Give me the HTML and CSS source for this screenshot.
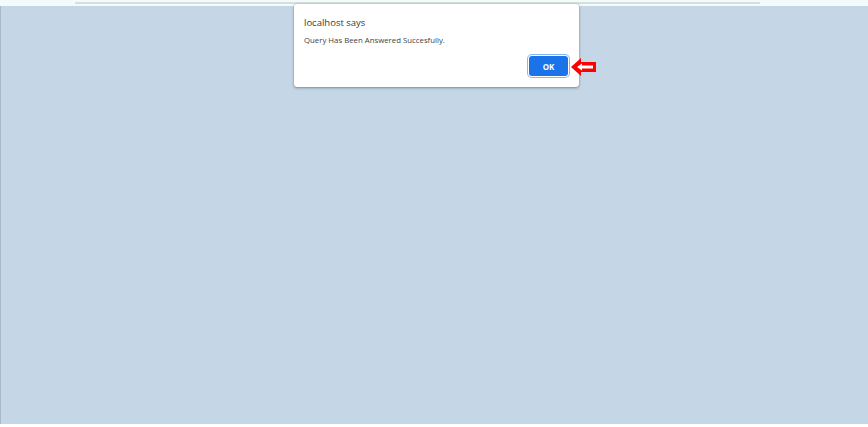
FILE: index.html
```html
<!DOCTYPE html>
<html>
<head>
<meta charset="utf-8">
<link rel="stylesheet" href="styles.css">
</head>
<body>
<div class="screen">
  <div class="topbar"><div class="topline"></div></div>
  <div class="page"></div>
  <div class="bottombar"></div>
</div>
<div class="dialog">
  <div class="title">localhost says</div>
  <div class="message">Query Has Been Answered Succesfully.</div>
  <div class="actions">
    <button class="ok">OK</button>
  </div>
</div>
<svg class="arrow" width="26" height="18" viewBox="0 0 26 18">
  <polygon points="0,9 10,0 10,4 25,4 25,14 10,14 10,18" fill="#ff0000"/>
  <polygon points="6,9 11,5.5 11,7.5 22,7.5 22,10.5 11,10.5 11,12.5" fill="#ffffff"/>
</svg>
</body>
</html>
```
FILE: styles.css
```css
html, body {
  margin: 0;
  padding: 0;
  width: 868px;
  height: 427px;
  overflow: hidden;
  background: #ffffff;
}
.screen {
  display: flex;
  flex-direction: column;
  height: 427px;
}
.topbar {
  height: 6px;
  background: #f2fcfb;
  padding-top: 2px;
  padding-left: 75px;
  box-sizing: border-box;
}
.topline {
  width: 685px;
  height: 2px;
  background: #d5dfde;
}
.page {
  flex: 1;
  background: #c5d6e6;
  border-left: 1px solid #a9b8c6;
}
.bottombar {
  height: 3px;
  background: #ffffff;
}
.dialog {
  position: absolute;
  left: 294px;
  top: 4px;
  width: 285px;
  height: 83px;
  box-sizing: border-box;
  background: #ffffff;
  border-radius: 3px;
  box-shadow: 0 1px 3px rgba(0,0,0,0.35), 0 0 1px rgba(0,0,0,0.3);
  padding: 12px 10px 0 10px;
  font-family: "Open Sans", "Noto Sans", sans-serif;
  color: #3a3a3a;
}
.title {
  font-size: 9.5px;
  line-height: 14px;
}
.message {
  margin-top: 5px;
  font-size: 7.8px;
  line-height: 11px;
  color: #444444;
}
.actions {
  display: flex;
  justify-content: flex-end;
  margin-top: 10px;
  padding-right: 1px;
}
.ok {
  width: 39px;
  height: 20px;
  border: none;
  border-radius: 3px;
  background: #1a73e8;
  color: #ffffff;
  font-family: "Open Sans", "Noto Sans", sans-serif;
  font-weight: 700;
  font-size: 8px;
  padding: 0;
  box-shadow: 0 0 0 1px #ffffff, 0 0 0 2px #8ab4f8;
}
.arrow {
  position: absolute;
  left: 571px;
  top: 58px;
}
```
